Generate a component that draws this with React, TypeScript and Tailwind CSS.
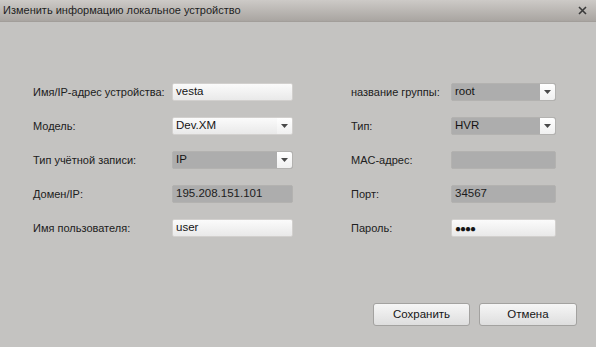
import { ReactNode } from 'react';

const font = { fontFamily: '"Liberation Sans", Arial, sans-serif' };

function Arrow() {
  return (
    <svg width="7" height="4" viewBox="0 0 7 4" className="block">
      <path d="M0 0 H7 L3.5 4 Z" fill="#4a4a4a" />
    </svg>
  );
}

// editable white field
function TextField({ value, width, small }: { value: string; width: string; small?: boolean }) {
  return (
    <div
      className={`flex h-[18px] ${width} items-center rounded-[2px] border border-[#d2d0ce] bg-gradient-to-b from-[#fbfbfb] to-[#e9e9e9] pl-[3px] ${
        small ? 'text-[10px] tracking-[-1px]' : 'text-[11.5px]'
      } text-[#141414]`}
    >
      {value}
    </div>
  );
}

// greyed-out field
function GreyField({ value, width }: { value: string; width: string }) {
  return (
    <div
      className={`flex h-[18px] ${width} items-center rounded-[2px] border border-[#b3b2b0] bg-[#adadad] pl-[3px] text-[11.5px] text-[#1c1c1c]`}
    >
      {value}
    </div>
  );
}

function SelectField({ value, width, grey }: { value: string; width: string; grey?: boolean }) {
  return (
    <div
      className={`flex h-[18px] ${width} items-center rounded-[2px] border ${
        grey
          ? 'border-[#b3b2b0] bg-[#adadad]'
          : 'border-[#d2d0ce] bg-gradient-to-b from-[#fbfbfb] to-[#e9e9e9]'
      } pl-[3px] text-[11.5px] text-[#141414]`}
    >
      <span className="flex-1">{value}</span>
      <div className="flex h-full w-[15px] items-center justify-center rounded-r-[2px] bg-gradient-to-b from-[#ffffff] to-[#f0f0f0]">
        <Arrow />
      </div>
    </div>
  );
}

function Row({ left, leftLabel, right, rightLabel }: { left: ReactNode; leftLabel: string; right: ReactNode; rightLabel: string }) {
  return (
    <div className="flex h-[18px] items-center">
      <div className="w-[139px] whitespace-nowrap text-[11px] text-[#202020]">{leftLabel}</div>
      {left}
      <div className="ml-[58px] w-[100px] whitespace-nowrap text-[11px] text-[#202020]">{rightLabel}</div>
      {right}
    </div>
  );
}

export default function App() {
  return (
    <div className="h-[347px] w-[596px] overflow-hidden bg-[#c4c3c1]" style={font}>
      {/* Title bar */}
      <div className="flex h-[22px] items-center justify-between border-b border-[#a29e9a] bg-gradient-to-b from-[#cdcac7] to-[#a9a5a1] pl-[3px] pr-[9px]">
        <span className="text-[11px] text-[#1e1e1e]">Изменить информацию локальное устройство</span>
        <svg width="9" height="9" viewBox="0 0 9 9">
          <path d="M1 1 L8 8 M8 1 L1 8" stroke="#3a3a3a" strokeWidth="1.6" />
        </svg>
      </div>

      <div className="flex flex-col gap-[16px] pl-[33px] pt-[61px]">
        <Row
          leftLabel="Имя/IP-адрес устройства:"
          left={<TextField value="vesta" width="w-[121px]" />}
          rightLabel="название группы:"
          right={<SelectField value="root" width="w-[105px]" grey />}
        />
        <Row
          leftLabel="Модель:"
          left={<SelectField value="Dev.XM" width="w-[121px]" />}
          rightLabel="Тип:"
          right={<SelectField value="HVR" width="w-[105px]" grey />}
        />
        <Row
          leftLabel="Тип учётной записи:"
          left={<SelectField value="IP" width="w-[121px]" grey />}
          rightLabel="MAC-адрес:"
          right={<GreyField value="" width="w-[105px]" />}
        />
        <Row
          leftLabel="Домен/IP:"
          left={<GreyField value="195.208.151.101" width="w-[121px]" />}
          rightLabel="Порт:"
          right={<GreyField value="34567" width="w-[105px]" />}
        />
        <Row
          leftLabel="Имя пользователя:"
          left={<TextField value="user" width="w-[121px]" />}
          rightLabel="Пароль:"
          right={<TextField value="●●●●" width="w-[105px]" small />}
        />
      </div>

      <div className="mt-[66px] flex justify-end gap-[9px] pr-[19px]">
        <button className="h-[23px] w-[97px] rounded-[3px] border border-[#a3a2a0] bg-gradient-to-b from-[#f6f6f6] to-[#dedede] text-[11.5px] text-[#151515]">
          Сохранить
        </button>
        <button className="h-[23px] w-[98px] rounded-[3px] border border-[#a3a2a0] bg-gradient-to-b from-[#f6f6f6] to-[#dedede] text-[11.5px] text-[#151515]">
          Отмена
        </button>
      </div>
    </div>
  );
}
